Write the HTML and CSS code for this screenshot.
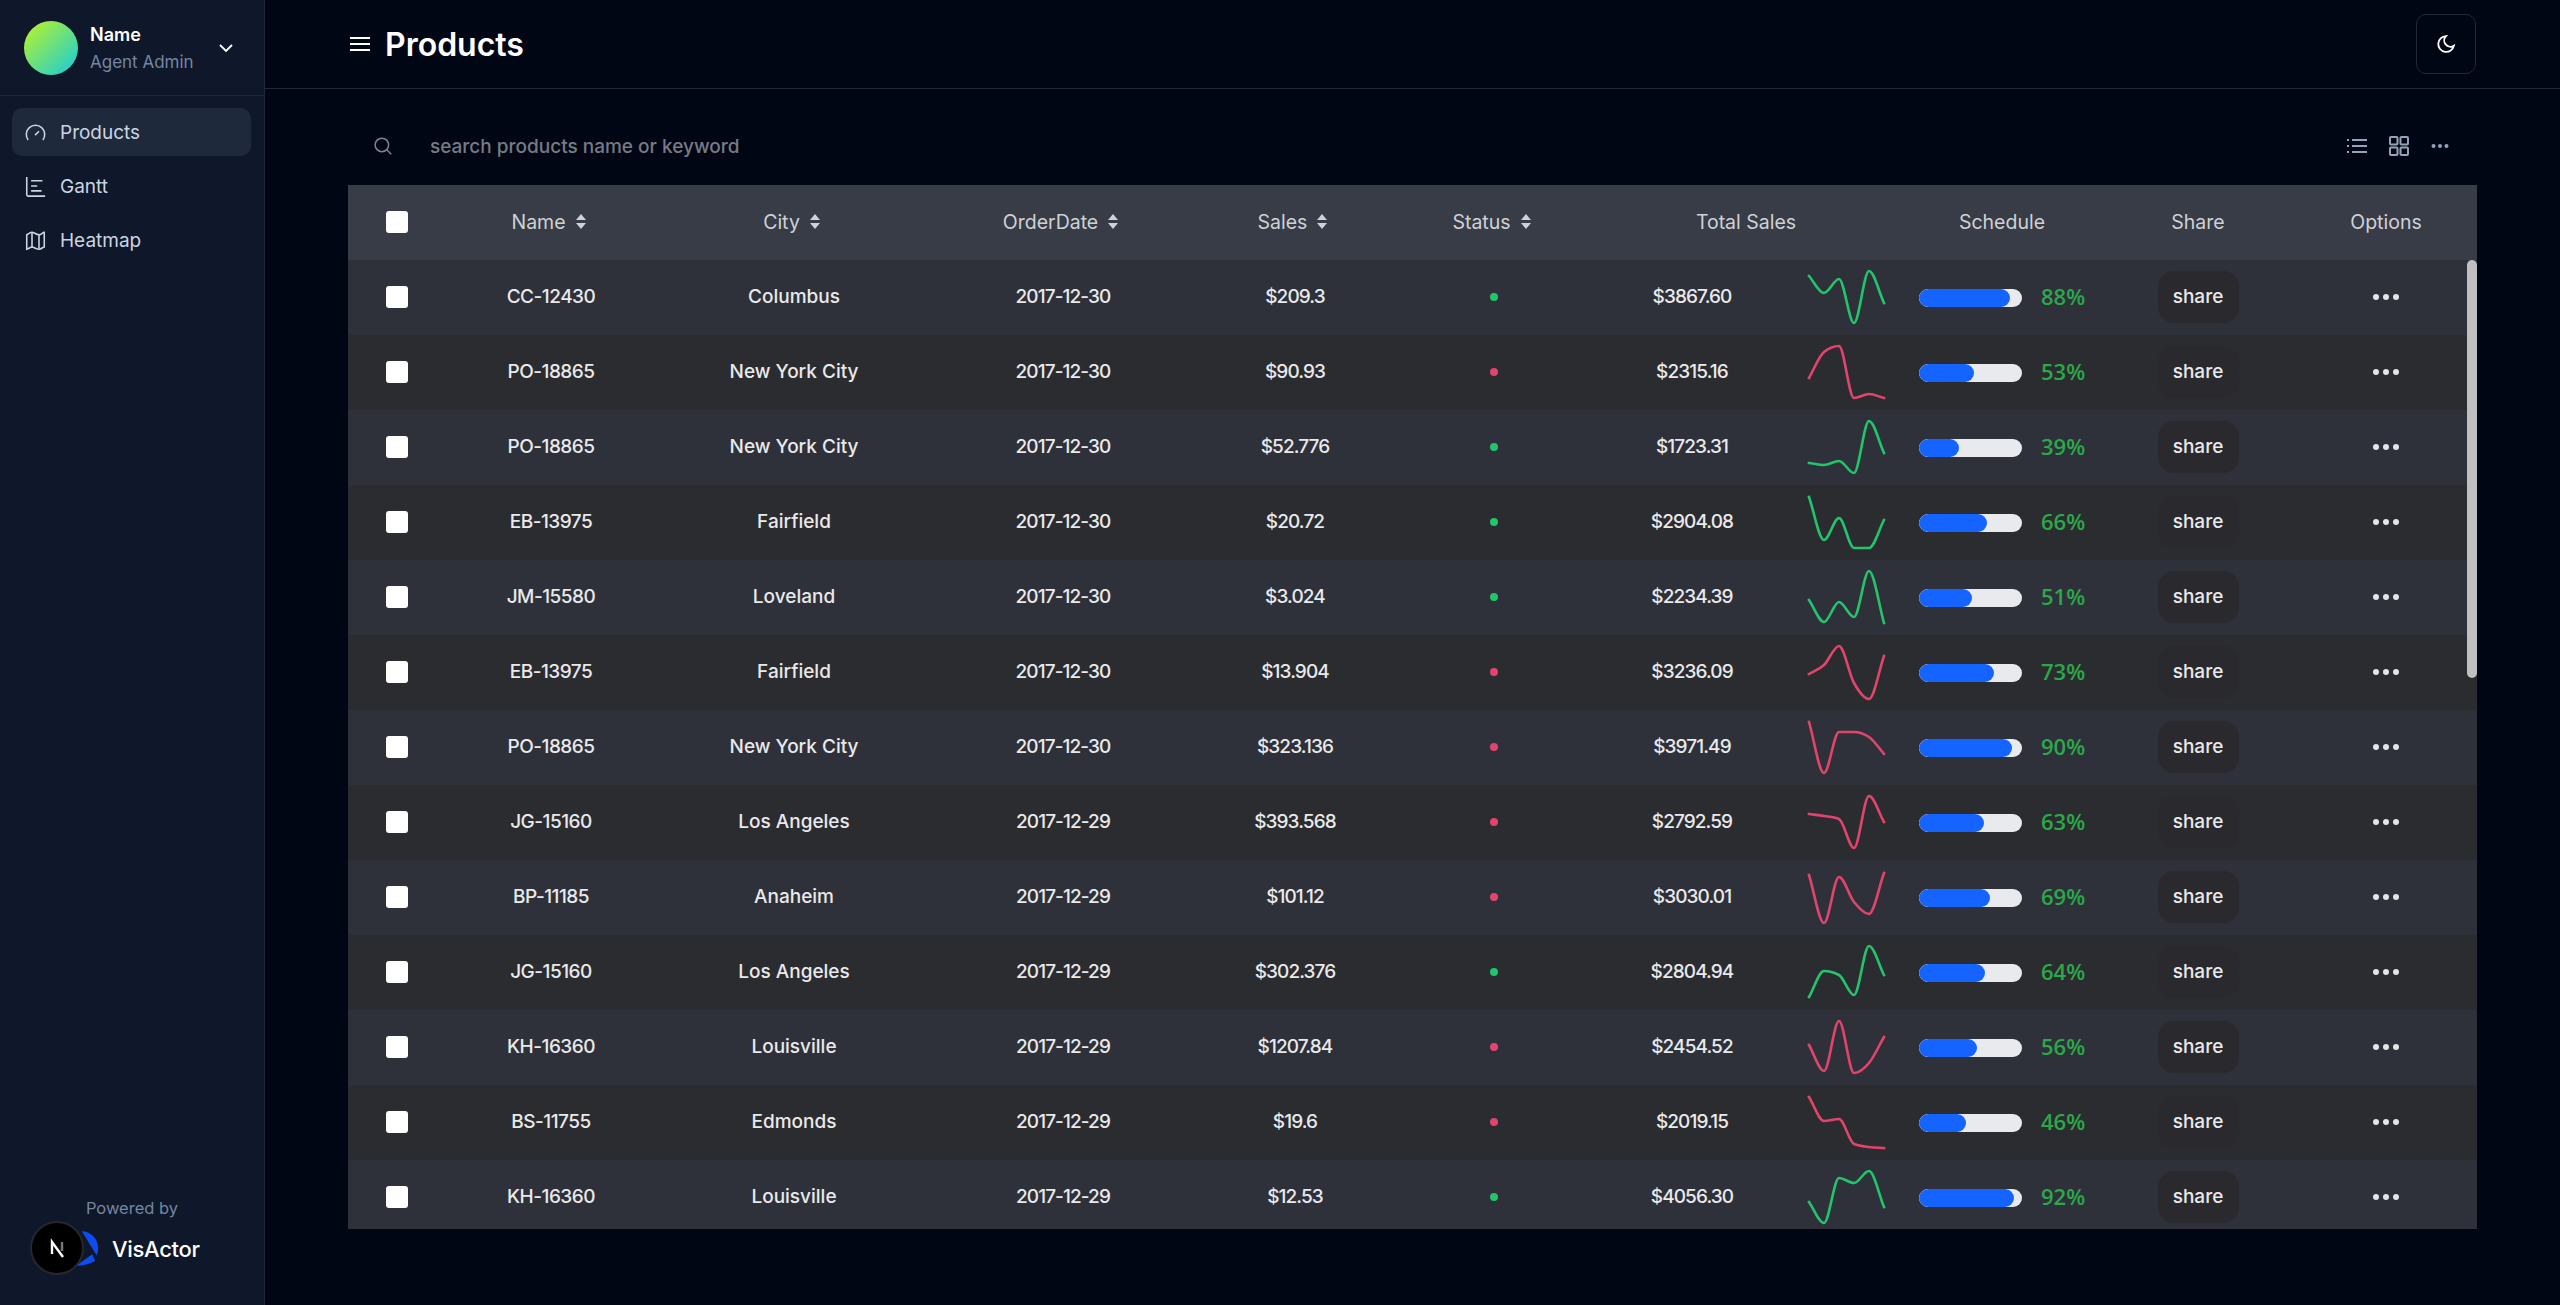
FILE: index.html
```html
<!DOCTYPE html>
<html lang="en">
<head>
  <meta charset="UTF-8">
  <title>Products</title>
  <link rel="stylesheet" href="styles.css">
</head>
<body>

  <aside class="sidebar">
    <div class="account">
      <div class="avatar"></div>
      <div class="account-text">
        <div class="account-name">Name</div>
        <div class="account-role">Agent Admin</div>
      </div>
      <svg class="chevron" viewBox="0 0 24 24"><path d="m4 8 8 8 8-8"/></svg>
    </div>

    <nav class="nav">
      <a class="nav-item active">
        <svg class="nav-icon" viewBox="0 0 24 24"><path d="M3.6 20.5A10.5 10.5 0 1 1 20.4 20.5"/><path d="m11.5 15 4.5-4.500"/></svg>
        Products
      </a>
      <a class="nav-item">
        <svg class="nav-icon" viewBox="0 0 24 24"><path d="M2 1v20.500a1.500 1.500 0 0 0 1.500 1.500H23"/><path d="M7 5.500h13M7 11.500h7M7 17h12"/></svg>
        Gantt
      </a>
      <a class="nav-item">
        <svg class="nav-icon" viewBox="0 0 24 24"><path d="M2 5.500c3-1.500 4-3 6-3s5 3 8 3 4-3 6-3v17c-2 0-3 2.500-6 2.500s-6-2.500-8-2.500-3 1.500-6 2.500z"/><path d="M8 2.500v18M16 5.500v16"/></svg>
        Heatmap
      </a>
    </nav>

    <div class="powered">
      <div class="powered-label">Powered by</div>
      <div class="powered-brand">
        <svg class="brand-mark" viewBox="0 0 24 36"><path d="M6 0c9 0 17 7 17 18 0 3-.5 5-1.500 7L6 0z"/><path d="M17 24 0 36c8 0 14-2 20-5z"/></svg>
        <span>VisActor</span>
      </div>
      <div class="next-badge">
        <svg viewBox="0 0 24 24"><path class="next-n" d="M7 18V6l11 15"/><path class="next-bar" d="M17 6v9"/></svg>
      </div>
    </div>
  </aside>

  <main class="main">
    <header class="topbar">
      <svg class="menu-icon" viewBox="0 0 20 14"><path d="M0 1h20M0 7h20M0 13h20"/></svg>
      <h1>Products</h1>
      <button class="theme-btn">
        <svg viewBox="0 0 24 24"><path d="M12 2.500a9.500 9.500 0 1 0 9.500 11.500A7.500 7.500 0 0 1 12 2.500z"/></svg>
      </button>
    </header>

    <section class="content">
      <div class="toolbar">
        <svg class="search-icon" viewBox="0 0 24 24"><circle cx="10.500" cy="10.500" r="9"/><path d="m17 17 6 6"/></svg>
        <span class="search-text">search products name or keyword</span>
        <div class="view-icons">
          <svg viewBox="0 0 20 14"><path d="M5 1h15M5 7h15M5 13h15"/><path d="M0 1h2M0 7h2M0 13h2"/></svg>
          <svg viewBox="0 0 20 20"><rect x="1" y="1" width="7.500" height="7.500" rx="1"/><rect x="11.500" y="1" width="7.500" height="7.500" rx="1"/><rect x="1" y="11.500" width="7.500" height="7.500" rx="1"/><rect x="11.500" y="11.500" width="7.500" height="7.500" rx="1"/></svg>
          <svg class="view-dots" viewBox="0 0 18 6"><circle cx="2.500" cy="3" r="2"/><circle cx="9" cy="3" r="2"/><circle cx="15.500" cy="3" r="2"/></svg>
        </div>
      </div>

      <div class="table">
        <div class="row head">
          <div class="cell"><span class="check"></span></div>
          <div class="cell">Name <svg class="sort" viewBox="0 0 10 15"><path d="M5 0l5 6H0zM5 15 0 9h10z"/></svg></div>
          <div class="cell">City <svg class="sort" viewBox="0 0 10 15"><path d="M5 0l5 6H0zM5 15 0 9h10z"/></svg></div>
          <div class="cell">OrderDate <svg class="sort" viewBox="0 0 10 15"><path d="M5 0l5 6H0zM5 15 0 9h10z"/></svg></div>
          <div class="cell">Sales <svg class="sort" viewBox="0 0 10 15"><path d="M5 0l5 6H0zM5 15 0 9h10z"/></svg></div>
          <div class="cell">Status <svg class="sort" viewBox="0 0 10 15"><path d="M5 0l5 6H0zM5 15 0 9h10z"/></svg></div>
          <div class="cell">Total Sales</div>
          <div class="cell">Schedule</div>
          <div class="cell">Share</div>
          <div class="cell">Options</div>
        </div>
        <div id="rows"></div>
        <div class="scroll-thumb"></div>
      </div>
    </section>
  </main>

  <script src="app.js"></script>
</body>
</html>
```

FILE: styles.css
```css
* { box-sizing: border-box; }

body {
  margin: 0;
  height: 1305px;
  display: flex;
  overflow: hidden;
  background: #000614;
  color: #fff;
  font-family: "Inter", sans-serif;
}

/* sidebar */
.sidebar {
  width: 265px;
  flex-shrink: 0;
  display: flex;
  flex-direction: column;
  background: #0f172a;
  border-right: 1px solid #1e293b;
}
.account {
  height: 96px;
  display: flex;
  align-items: center;
  padding: 0 29px 0 24px;
  border-bottom: 1px solid #1e293b;
}
.avatar {
  width: 54px;
  height: 54px;
  border-radius: 50%;
  background: linear-gradient(135deg, #bef51f, #14cbe0);
}
.account-text { margin-left: 12px; flex: 1; }
.account-name { font-size: 18px; font-weight: 600; line-height: 28px; }
.account-role { font-size: 17px; line-height: 26px; color: #7486a3; }
.chevron {
  width: 18px;
  height: 18px;
  fill: none;
  stroke: #fff;
  stroke-width: 2.4;
}

.nav {
  display: flex;
  flex-direction: column;
  gap: 6px;
  padding: 12px 13px 12px 12px;
}
.nav-item {
  height: 48px;
  display: flex;
  align-items: center;
  gap: 14px;
  padding: 0 13px;
  border-radius: 10px;
  font-size: 19px;
  color: #cbd5e1;
}
.nav-item.active { background: #1e293b; }
.nav-icon {
  width: 21px;
  height: 21px;
  fill: none;
  stroke: #cbd5e1;
  stroke-width: 1.800;
}

.powered {
  position: relative;
  margin-top: auto;
  padding-bottom: 39px;
}
.powered-label {
  text-align: center;
  font-size: 16.500px;
  line-height: 24px;
  color: #7486a3;
}
.powered-brand {
  display: flex;
  align-items: center;
  gap: 13px;
  margin-top: 11px;
  padding-left: 76px;
  font-size: 22px;
  font-weight: 500;
  letter-spacing: -0.3px;
}
.brand-mark { width: 23px; height: 35px; fill: #0f4cf0; }
.next-badge {
  position: absolute;
  left: 30px;
  bottom: 30px;
  width: 54px;
  height: 54px;
  padding: 13px;
  border-radius: 50%;
  background: #000;
  border: 2px solid #26282c;
}
.next-badge svg { display: block; fill: none; stroke-width: 2.400; }
.next-n { stroke: #fff; }
.next-bar { stroke: #777; }

/* main area */
.main {
  flex: 1;
  min-width: 0;
  display: flex;
  flex-direction: column;
}
.topbar {
  height: 89px;
  display: flex;
  align-items: center;
  padding: 0 84px 0 85px;
  border-bottom: 1px solid #1e293b;
}
.menu-icon {
  width: 20px;
  height: 14px;
  fill: none;
  stroke: #fff;
  stroke-width: 2;
}
.topbar h1 {
  margin: 0 0 0 15px;
  flex: 1;
  font-size: 32px;
  font-weight: 600;
}
.theme-btn {
  width: 60px;
  height: 60px;
  padding: 0;
  display: flex;
  align-items: center;
  justify-content: center;
  background: transparent;
  border: 1px solid #1e293b;
  border-radius: 10px;
}
.theme-btn svg {
  width: 20px;
  height: 20px;
  fill: none;
  stroke: #fff;
  stroke-width: 2.200;
}

.content { padding: 25px 83px 0; }
.toolbar {
  height: 64px;
  margin-bottom: 7px;
  display: flex;
  align-items: center;
  padding: 0 28px 0 26px;
}
.search-icon {
  width: 18px;
  height: 18px;
  fill: none;
  stroke: #7a8494;
  stroke-width: 2;
}
.search-text {
  margin-left: 38px;
  flex: 1;
  font-size: 19px;
  font-weight: 500;
  color: #777b85;
}
.view-icons {
  display: flex;
  align-items: center;
  gap: 22px;
}
.view-icons svg {
  width: 20px;
  height: 20px;
  fill: none;
  stroke: #94a3b8;
  stroke-width: 2;
}
.view-icons .view-dots { width: 18px; fill: #94a3b8; stroke: none; }

/* table */
.table {
  position: relative;
  height: 1044px;
  overflow: hidden;
}
.row {
  display: grid;
  grid-template-columns: 98px 210px 276px 262px 202px 196px 308px 204px 188px 188px;
  height: 75px;
  width: 2132px;
  font-size: 19px;
  font-weight: 500;
  color: #e9e9eb;
  background: #2b2c2f;
}
.row:nth-child(odd) { background: #2e313a; }
.row.head { background: #383c46; color: #cfd1d6; font-size: 19.500px; font-weight: 400; }
.cell {
  display: flex;
  align-items: center;
  justify-content: center;
  gap: 10px;
  padding-bottom: 2px;
}
.id { letter-spacing: -0.5px; }
.num { letter-spacing: -0.9px; }
.check {
  width: 22px;
  height: 22px;
  border-radius: 3px;
  background: #fff;
}
.sort { width: 10px; height: 15px; margin-right: 5px; fill: #cfd1d6; }
.dot { width: 8px; height: 8px; border-radius: 50%; }
.up { background: #22c56c; }
.down { background: #e2446e; }

.total { justify-content: flex-start; gap: 0; padding-bottom: 0; }
.total-value { width: 200px; text-align: center; padding-bottom: 2px; }
.spark { width: 108px; height: 75px; fill: none; stroke-width: 2.600; stroke-linecap: square; }
.spark.line-up { stroke: #22c56c; }
.spark.line-down { stroke: #e2446e; }

.schedule { justify-content: flex-start; padding: 0 0 0 19px; gap: 19px; }
.track {
  width: 103px;
  height: 18px;
  border-radius: 9px;
  background: #e8eaed;
  overflow: hidden;
}
.fill { height: 100%; border-radius: 9px; background: #1664ff; }
.pct {
  font-family: "Open Sans", sans-serif;
  font-size: 22px;
  font-weight: 600;
  color: #2ba84a;
  padding-bottom: 3px;
}
.share-btn {
  width: 81px;
  height: 52px;
  display: flex;
  align-items: center;
  justify-content: center;
  border-radius: 16px;
  background: #29292e;
  font-size: 19px;
}
.dots { display: flex; gap: 4px; }
.dots i { width: 6px; height: 6px; border-radius: 50%; background: #e3e5e8; }

.scroll-thumb {
  position: absolute;
  top: 75px;
  right: 0;
  width: 10px;
  height: 418px;
  border-radius: 5px;
  background: #bfbfbf;
}
```

FILE: app.js
```js
// name, city, date, sales, up?, total, schedule, sparkline y values
const data = [
  ['CC-12430', 'Columbus', '2017-12-30', '$209.3', true, '$3867.60', 88, [16, 33, 19, 63, 11, 43]],
  ['PO-18865', 'New York City', '2017-12-30', '$90.93', false, '$2315.16', 53, [43, 17, 11, 63, 59, 63]],
  ['PO-18865', 'New York City', '2017-12-30', '$52.776', true, '$1723.31', 39, [53, 55, 51, 63, 11, 43]],
  ['EB-13975', 'Fairfield', '2017-12-30', '$20.72', true, '$2904.08', 66, [12, 55, 33, 63, 63, 35]],
  ['JM-15580', 'Loveland', '2017-12-30', '$3.024', true, '$2234.39', 51, [40, 62, 42, 57, 11, 63]],
  ['EB-13975', 'Fairfield', '2017-12-30', '$13.904', false, '$3236.09', 73, [39, 30, 11, 48, 64, 21]],
  ['PO-18865', 'New York City', '2017-12-30', '$323.136', false, '$3971.49', 90, [12, 63, 22, 22, 27, 44]],
  ['JG-15160', 'Los Angeles', '2017-12-29', '$393.568', false, '$2792.59', 63, [29, 31, 34, 63, 11, 37]],
  ['BP-11185', 'Anaheim', '2017-12-29', '$101.12', false, '$3030.01', 69, [15, 63, 17, 42, 54, 13]],
  ['JG-15160', 'Los Angeles', '2017-12-29', '$302.376', true, '$2804.94', 64, [62, 36, 40, 60, 11, 40]],
  ['KH-16360', 'Louisville', '2017-12-29', '$1207.84', false, '$2454.52', 56, [35, 61, 11, 63, 53, 27]],
  ['BS-11755', 'Edmonds', '2017-12-29', '$19.6', false, '$2019.15', 46, [12, 36, 34, 59, 62, 63]],
  ['KH-16360', 'Louisville', '2017-12-29', '$12.53', true, '$4056.30', 92, [42, 63, 18, 23, 11, 47]]
];

// monotone curve through evenly spaced points
function sparkPath(ys) {
  const step = 15;
  const left = 17;
  const slopes = ys.slice(1).map((y, i) => (y - ys[i]) / step);
  const tangents = ys.map((y, i) => {
    if (i === 0) return slopes[0];
    if (i === ys.length - 1) return slopes[i - 1];
    const a = slopes[i - 1];
    const b = slopes[i];
    if (a * b <= 0) return 0;
    return Math.sign(a) * Math.min(Math.abs(a), Math.abs(b), Math.abs(a + b) / 4) * 2;
  });
  let d = `M${left} ${ys[0]}`;
  for (let i = 1; i < ys.length; i++) {
    const x0 = left + (i - 1) * step;
    const x1 = x0 + step;
    d += `C${x0 + step / 3} ${ys[i - 1] + tangents[i - 1] * step / 3} ${x1 - step / 3} ${ys[i] - tangents[i] * step / 3} ${x1} ${ys[i]}`;
  }
  return d;
}

document.getElementById('rows').innerHTML = data.map(([name, city, date, sales, up, total, pct, ys]) => `
  <div class="row">
    <div class="cell"><span class="check"></span></div>
    <div class="cell id">${name}</div>
    <div class="cell">${city}</div>
    <div class="cell num">${date}</div>
    <div class="cell num">${sales}</div>
    <div class="cell"><span class="dot ${up ? 'up' : 'down'}"></span></div>
    <div class="cell total">
      <span class="total-value num">${total}</span>
      <svg class="spark ${up ? 'line-up' : 'line-down'}" viewBox="0 0 108 75"><path d="${sparkPath(ys)}"/></svg>
    </div>
    <div class="cell schedule">
      <div class="track"><div class="fill" style="width: ${pct}%"></div></div>
      <span class="pct">${pct}%</span>
    </div>
    <div class="cell"><span class="share-btn">share</span></div>
    <div class="cell"><span class="dots"><i></i><i></i><i></i></span></div>
  </div>`).join('');
```
